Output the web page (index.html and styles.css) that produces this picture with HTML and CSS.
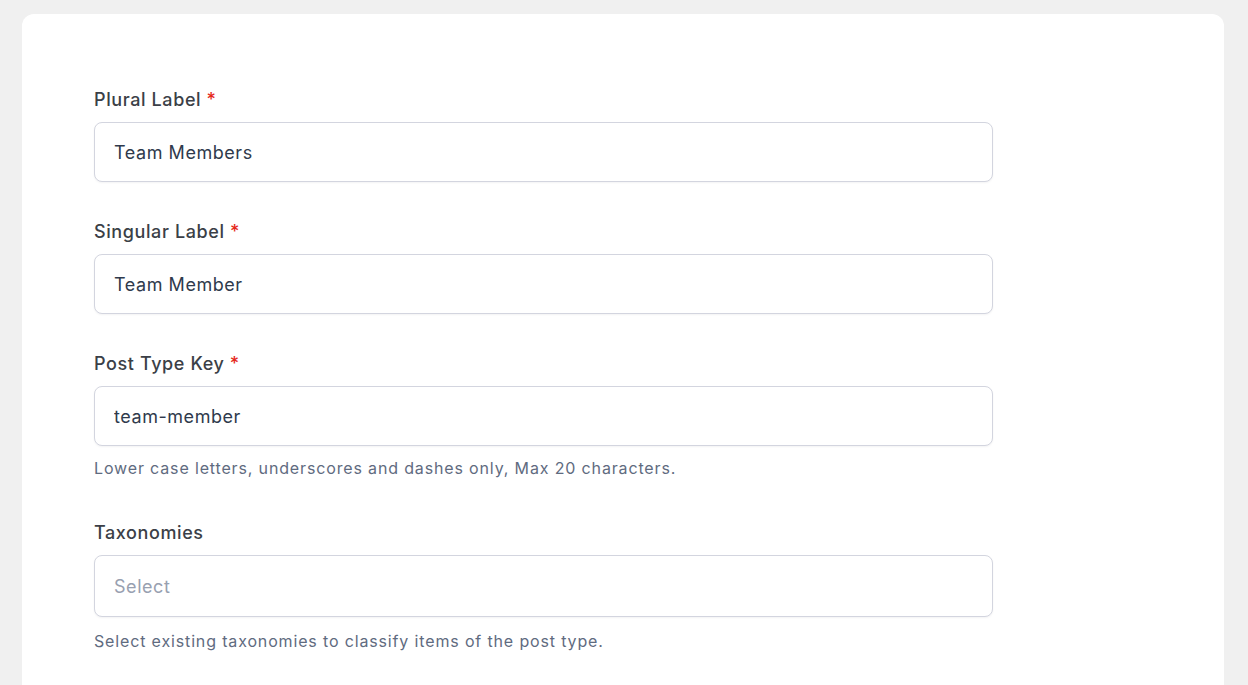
FILE: index.html
```html
<!DOCTYPE html>
<html lang="en">
<head>
    <meta charset="UTF-8">
    <meta name="viewport" content="width=device-width, initial-scale=1.0">
    <title>Add Post Type</title>
    <link rel="stylesheet" href="styles.css">
</head>
<body>
    <div class="card">
        <form class="post-type-form">
            <div class="form-group">
                <label for="pluralLabel">Plural Label <span class="required">*</span></label>
                <input type="text" id="pluralLabel" value="Team Members">
            </div>

            <div class="form-group">
                <label for="singularLabel">Singular Label <span class="required">*</span></label>
                <input type="text" id="singularLabel" value="Team Member">
            </div>

            <div class="form-group">
                <label for="postTypeKey">Post Type Key <span class="required">*</span></label>
                <input type="text" id="postTypeKey" value="team-member">
                <p class="help">Lower case letters, underscores and dashes only, Max 20 characters.</p>
            </div>

            <div class="form-group">
                <label for="taxonomies">Taxonomies</label>
                <div class="select-box" id="taxonomies">Select</div>
                <p class="help help-select">Select existing taxonomies to classify items of the post type.</p>
            </div>
        </form>
    </div>
</body>
</html>
```

FILE: styles.css
```css
body {
    margin: 0;
    padding: 14px 24px 0 22px;
    font-family: 'Inter', 'Noto Sans', sans-serif;
    background-color: #f0f0f0;
    height: 100vh;
    box-sizing: border-box;
    overflow: hidden;
}

.card {
    background-color: #fff;
    border-radius: 12px 12px 0 0;
    padding: 74px 72px 0 72px;
    height: 100%;
    box-sizing: border-box;
}

.post-type-form {
    width: 899px;
}

.form-group {
    display: flex;
    flex-direction: column;
    margin-bottom: 38px;
}

label {
    font-size: 18px;
    line-height: 24px;
    font-weight: 500;
    letter-spacing: 0.6px;
    color: #3b3f47;
    margin-bottom: 10px;
}

.required {
    color: #e5281b;
}

input, .select-box {
    height: 60px;
    padding: 0 19px;
    border: 1px solid #d3d5df;
    border-radius: 8px;
    box-shadow: 0 1px 2px rgba(16, 24, 40, 0.05);
    background-color: #fff;
    color: #2f3a4c;
    font-family: inherit;
    font-size: 18px;
    letter-spacing: 0.55px;
    box-sizing: border-box;
    outline: none;
}

.select-box {
    height: 62px;
    display: flex;
    align-items: center;
    color: #98a0b0;
}

.help {
    margin: 10px 0 3px;
    font-size: 16px;
    line-height: 24px;
    letter-spacing: 0.85px;
    color: #5f6b80;
}

.help-select {
    margin-top: 12px;
}
```
